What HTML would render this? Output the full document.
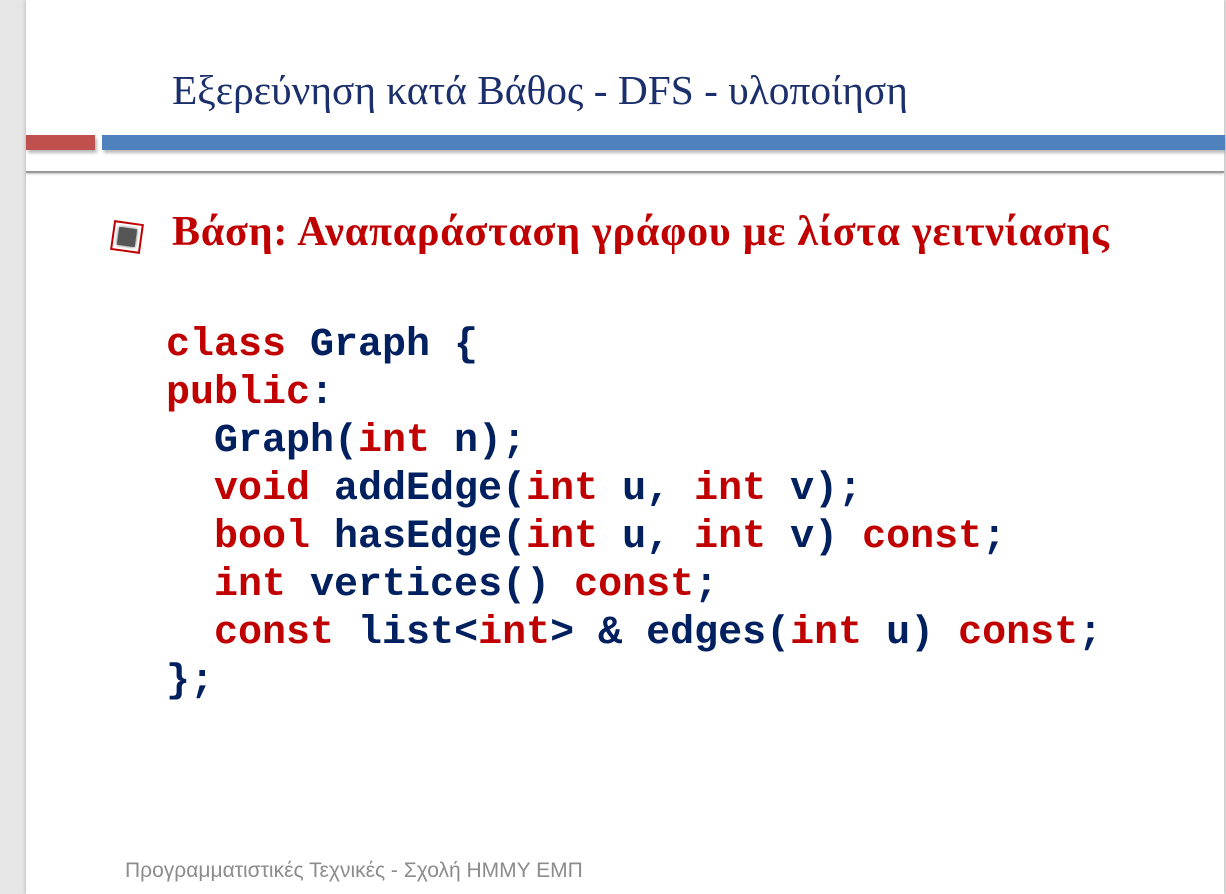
<!DOCTYPE html>
<html><head><meta charset="utf-8"><style>
html,body{margin:0;padding:0;width:1226px;height:894px;overflow:hidden;background:#e6e6e6}
#s{position:absolute;left:26px;top:0;width:1198px;height:894px;background:#fff;box-shadow:0 0 4px #aaa}
.a{position:absolute;white-space:pre}
.t{font-family:"Liberation Serif",serif;font-size:41.4px;color:#1a2f6b;left:172px;top:66px;letter-spacing:0px}
.b{font-family:"Liberation Serif",serif;font-weight:bold;font-size:42px;color:#c00000;left:172px;top:208px;letter-spacing:0.8px}
.c{font-family:"Liberation Mono",monospace;font-weight:bold;font-size:40px;line-height:48px;color:#002060;left:166px;top:322px}
.r{color:#c00000}
.f{font-family:"Liberation Sans",sans-serif;font-size:21px;color:#8c8c8c;left:125px;top:859px}
</style></head><body>
<div id="s"></div>
<div class="a t">Εξερεύνηση κατά Βάθος - DFS - υλοποίηση</div>
<div class="a" style="left:26px;top:135px;width:69px;height:15px;background:#c0504d;box-shadow:2px 3px 3px #bbb"></div>
<div class="a" style="left:102px;top:135px;width:1123px;height:15px;background:#4f81bd;box-shadow:2px 3px 3px #bbb"></div>
<div class="a" style="left:26px;top:171px;width:1198px;height:2px;background:#999;box-shadow:0 1px 2px #bbb"></div>
<div class="a" style="left:112px;top:222px;width:30px;height:30px;border:2px solid #c00000;transform:rotate(8deg);box-sizing:border-box;background:#fff"><div style="position:absolute;left:4px;top:4px;width:18px;height:18px;background:#555;box-shadow:0 0 3px #555"></div></div>
<div class="a b">Βάση: Αναπαράσταση γράφου με λίστα γειτνίασης</div>
<div class="a c"><span class="r">class</span> Graph {
<span class="r">public</span>:
  Graph(<span class="r">int</span> n);
  <span class="r">void</span> addEdge(<span class="r">int</span> u, <span class="r">int</span> v);
  <span class="r">bool</span> hasEdge(<span class="r">int</span> u, <span class="r">int</span> v) <span class="r">const</span>;
  <span class="r">int</span> vertices() <span class="r">const</span>;
  <span class="r">const</span> list&lt;<span class="r">int</span>&gt; &amp; edges(<span class="r">int</span> u) <span class="r">const</span>;
};</div>
<div class="a f">Προγραμματιστικές Τεχνικές - Σχολή ΗΜΜΥ ΕΜΠ</div>
</body></html>
